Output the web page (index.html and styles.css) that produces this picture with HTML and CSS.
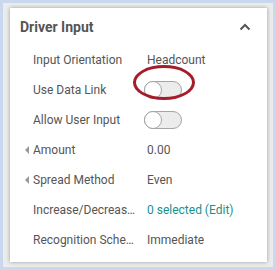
FILE: index.html
```html
<!DOCTYPE html>
<html lang="en">
<head>
    <meta charset="UTF-8">
    <title>Driver Input</title>
    <link rel="stylesheet" href="styles.css">
</head>
<body>
    <div class="frame">
        <div class="card">
            <div class="card-head">
                <h2>Driver Input</h2>
                <svg class="chevron" width="12" height="8" viewBox="0 0 12 8">
                    <path d="M1.5 6.5 L6 2 L10.5 6.5" fill="none" stroke="#555" stroke-width="2"/>
                </svg>
            </div>

            <div class="row">
                <span class="label">Input Orientation</span>
                <span class="value">Headcount</span>
            </div>
            <div class="row">
                <span class="label">Use Data Link</span>
                <span class="value">
                    <span class="toggle"><span class="knob"></span></span>
                    <span class="ring"></span>
                </span>
            </div>
            <div class="row">
                <span class="label">Allow User Input</span>
                <span class="value"><span class="toggle"><span class="knob"></span></span></span>
            </div>
            <div class="row">
                <span class="label has-arrow">Amount</span>
                <span class="value">0.00</span>
            </div>
            <div class="row">
                <span class="label has-arrow">Spread Method</span>
                <span class="value">Even</span>
            </div>
            <div class="row">
                <span class="label">Increase/Decrease Items</span>
                <span class="value link">0 selected (Edit)</span>
            </div>
            <div class="row">
                <span class="label">Recognition Schedule</span>
                <span class="value">Immediate</span>
            </div>
        </div>
    </div>
</body>
</html>
```

FILE: styles.css
```css
html, body {
    margin: 0;
    padding: 0;
}

body {
    width: 276px;
    height: 270px;
    background-color: #c9d8ee;
    padding: 3px;
    box-sizing: border-box;
    font-family: Roboto, "Liberation Sans", sans-serif;
}

.frame {
    background-color: #ececec;
    height: 264px;
    width: 270px;
    padding: 5px 6px 6px 7px;
    box-sizing: border-box;
}

.card {
    background-color: #fff;
    height: 254px;
    box-shadow: 0 0 4px rgba(0, 0, 0, 0.35);
}

.card-head {
    display: flex;
    align-items: center;
    justify-content: space-between;
    height: 37px;
    padding: 0 16px 0 10px;
}

h2 {
    margin: 0;
    font-size: 14px;
    font-weight: bold;
    color: #555;
}

.chevron {
    display: block;
}

.row {
    display: grid;
    grid-template-columns: 103px auto;
    column-gap: 11px;
    align-items: center;
    height: 30px;
    padding-left: 23px;
    font-size: 12px;
}

.label {
    color: #555;
    white-space: nowrap;
    overflow: hidden;
    text-overflow: ellipsis;
    position: relative;
}

.has-arrow {
    overflow: visible;
}

.has-arrow::before {
    content: "";
    position: absolute;
    left: -8px;
    top: 50%;
    margin-top: -4px;
    border-top: 4px solid transparent;
    border-bottom: 4px solid transparent;
    border-right: 4px solid #999;
}

.value {
    color: #555;
    position: relative;
    display: flex;
    align-items: center;
}

.link {
    color: #18918a;
}

.toggle {
    display: inline-block;
    position: relative;
    width: 38px;
    height: 18px;
    margin-left: -3px;
    box-sizing: border-box;
    border: 1px solid #a5a5a5;
    border-radius: 9px;
    background-color: #ececec;
}

.knob {
    position: absolute;
    left: -1px;
    top: -1px;
    width: 18px;
    height: 18px;
    box-sizing: border-box;
    border: 1px solid #a5a5a5;
    border-radius: 50%;
    background-color: #fff;
}

.ring {
    position: absolute;
    left: -14px;
    top: -16px;
    width: 62px;
    height: 35px;
    border: 3px solid #a51c2b;
    border-radius: 50%;
    box-sizing: border-box;
}
```
